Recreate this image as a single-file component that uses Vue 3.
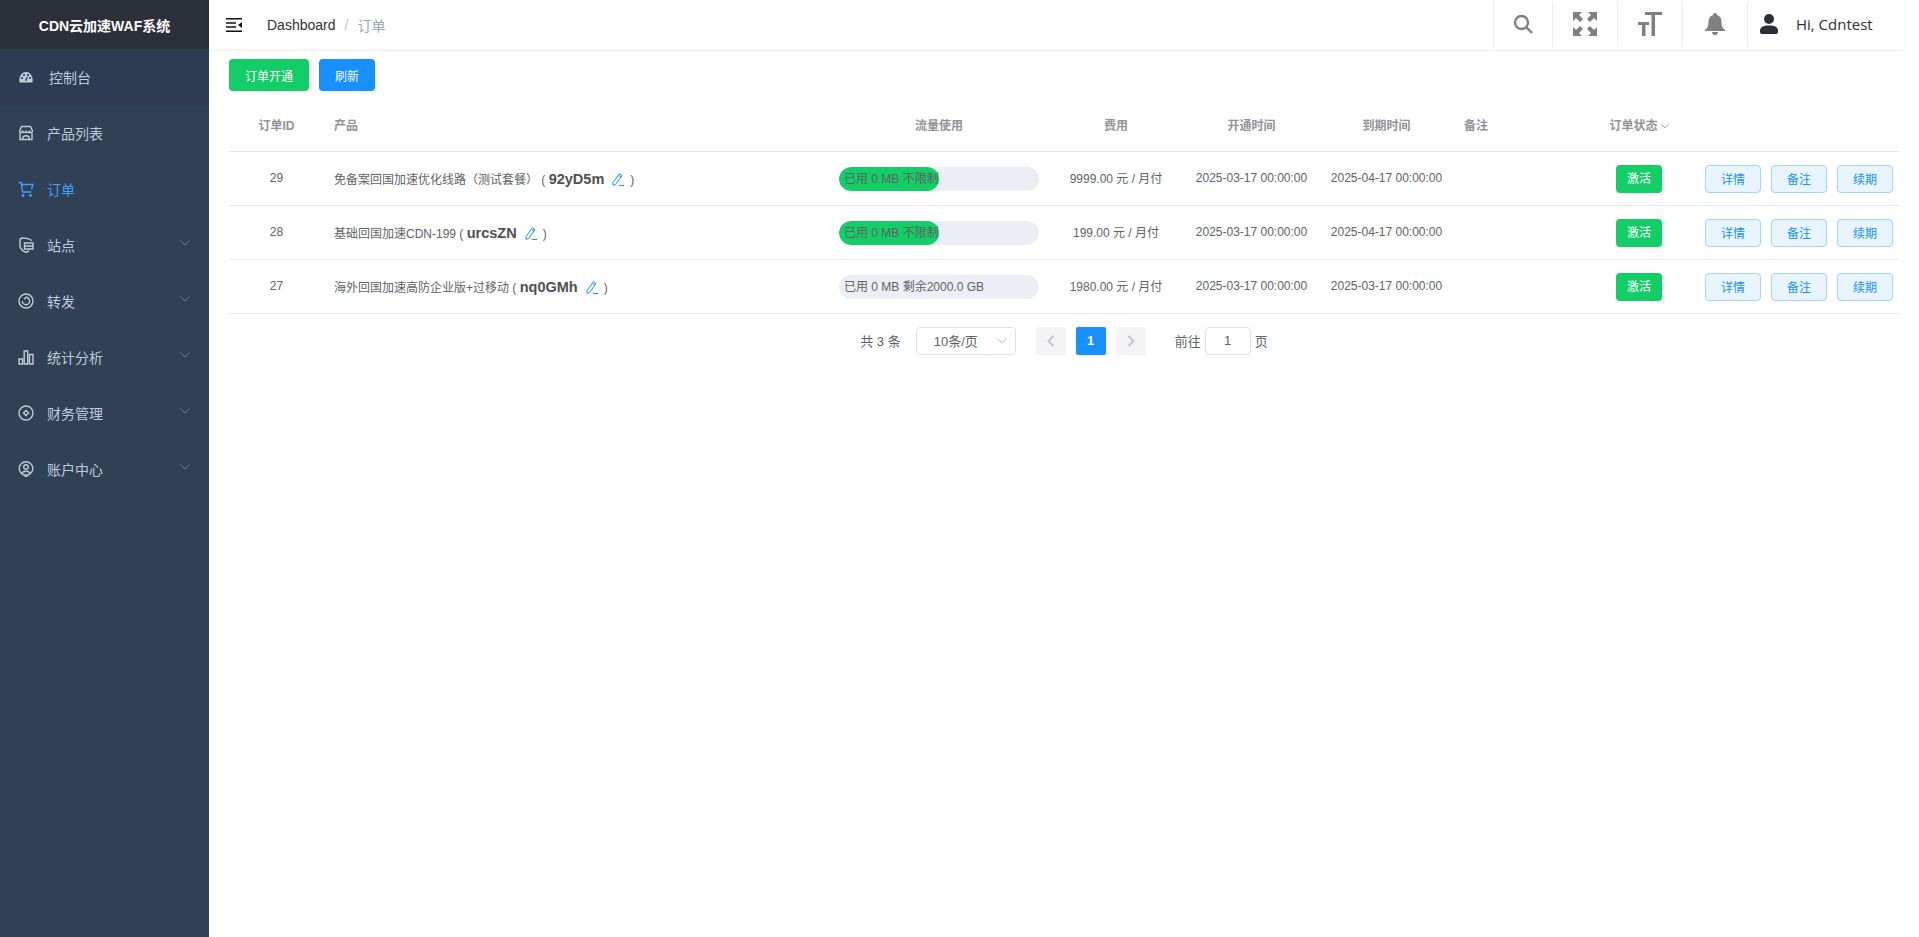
<script setup>
const menu = [
  { t: '控制台', i: 'gauge' }, { t: '产品列表', i: 'store' }, { t: '订单', i: 'cart', active: true },
  { t: '站点', i: 'site', arrow: true }, { t: '转发', i: 'ring', arrow: true }, { t: '统计分析', i: 'bars', arrow: true },
  { t: '财务管理', i: 'diamond', arrow: true }, { t: '账户中心', i: 'user', arrow: true }
]
const rows = [
  { id: 29, name: '免备案回国加速优化线路（测试套餐） (', code: '92yD5m', used: '已用 0 MB 不限制', full: true, fee: '9999.00 元 / 月付', start: '2025-03-17 00:00:00', end: '2025-04-17 00:00:00' },
  { id: 28, name: '基础回国加速CDN-199 (', code: 'urcsZN', used: '已用 0 MB 不限制', full: true, fee: '199.00 元 / 月付', start: '2025-03-17 00:00:00', end: '2025-04-17 00:00:00' },
  { id: 27, name: '海外回国加速高防企业版+过移动 (', code: 'nq0GMh', used: '已用 0 MB 剩余2000.0 GB', full: false, fee: '1980.00 元 / 月付', start: '2025-03-17 00:00:00', end: '2025-03-17 00:00:00' }
]
</script>
<template>
  <div class="page">
    <aside class="side">
      <div class="logo">CDN云加速WAF系统</div>
      <div v-for="(m, n) in menu" :key="m.t" class="item" :class="{ active: m.active, first: n === 0 }">
        <span class="mi">
          <svg viewBox="0 0 16 16" width="16" height="16" fill="none" stroke="currentColor" stroke-width="1.4">
            <template v-if="m.i === 'gauge'">
              <path d="M1.500 13.500C.5 8 3.500 3 8 3s7.500 5 6.500 10.500z" fill="currentColor" stroke="none"/>
              <g fill="#2d3c52" stroke="none"><circle cx="4" cy="9" r="1.100"/><circle cx="6" cy="6" r="1.100"/><circle cx="10" cy="6" r="1.100"/><circle cx="12" cy="9" r="1.100"/><path d="M7 11.500l2-4 .8.400-1.300 4.100z"/></g>
            </template>
            <template v-else-if="m.i === 'store'"><path d="M3.500 1.500h9l2 4.500c0 2-2.500 2-3.200.4-.8 1.600-2.500 1.600-3.300 0-.8 1.600-2.500 1.600-3.300 0C4 8 1.500 8 1.500 6zM2 8v6.500h12V8M4.500 14.500c0-5 7-5 7 0"/></template>
            <template v-else-if="m.i === 'cart'"><path d="M.5 1.500h2.700l1.300 9.500h9"/><path d="M3.500 3.500h11.500l-1.500 5"/><circle cx="5" cy="14.500" r=".7"/><circle cx="12.500" cy="14.500" r=".7"/></template>
            <template v-else-if="m.i === 'site'"><path d="M14 3.500C11 1.500 8 1 5 1 3.500 1 2 2 2 3.500V9c0 3 3 5 6 6.500l3-1.500"/><path d="M6.500 6h8.500v6H6.500zM6.500 9h8.500"/></template>
            <template v-else-if="m.i === 'ring'"><circle cx="8" cy="8" r="7"/><path d="M8 4.300A3.700 3.700 0 1 1 4.300 8M8 4.300L6 6.200"/></template>
            <template v-else-if="m.i === 'bars'"><path d="M1 10h3.500v5H1zM6.200 2h3.500v13H6.200zM11.500 5.500H15V15h-3.500z"/></template>
            <template v-else-if="m.i === 'diamond'"><circle cx="8" cy="8" r="7"/><path d="M8 5.500L10.500 8 8 10.500 5.500 8z"/></template>
            <template v-else><circle cx="8" cy="7.500" r="6.800"/><circle cx="8" cy="6" r="2.300"/><path d="M3.800 12.500C5 9.500 11 9.500 12.200 12.500M6.500 14.500L8 16l1.500-1.500"/></template>
          </svg>
        </span>
        <span>{{ m.t }}</span>
        <svg v-if="m.arrow" class="arr" viewBox="0 0 10 6" width="10" height="6" fill="none" stroke="currentColor"><path d="M.5.5L5 5 9.500.5"/></svg>
      </div>
    </aside>
    <main class="main">
      <header class="top">
        <svg class="ham" viewBox="0 0 16 14" width="16" height="14" fill="#111"><path d="M0 0h16v1.500H0zM0 4.200h10v1.500H0zM0 8.200h10v1.500H0zM0 12.500h16V14H0zM16 4v6l-4-3z"/></svg>
        <span class="crumb">Dashboard</span><span class="sep">/</span><span class="cur">订单</span>
        <div class="tools">
          <div class="tool"><svg viewBox="0 0 20 20" width="20" height="20" fill="none" stroke="#808080" stroke-width="2.400"><circle cx="8.500" cy="8.500" r="6.500"/><path d="M13 13l6 6"/></svg></div>
          <div class="tool"><svg viewBox="0 0 24 24" width="24" height="24" fill="#808080"><path d="M0 0h9L6 3l4 4-3 3-4-4-3 3zM24 0v9l-3-3-4 4-3-3 4-4-3-3zM0 24v-9l3 3 4-4 3 3-4 4 3 3zM24 24h-9l3-3-4-4 3-3 4 4 3-3z"/></svg></div>
          <div class="tool"><svg viewBox="0 0 24 24" width="24" height="24" fill="#808080"><path d="M7 0h17v3h-7v21h-3.500V3H7zM0 10h11v3H7.500v11H4V13H0z"/></svg></div>
          <div class="tool"><svg viewBox="0 0 20 22" width="20" height="22" fill="#808080"><path d="M10 0c1.200 0 2 .8 2 2 3 1 4.500 3.500 4.500 7 0 4 .8 6 3.500 8v1H0v-1c2.700-2 3.500-4 3.500-8 0-3.500 1.500-6 4.500-7 0-1.200.8-2 2-2zM7 19h6c0 1.800-1.300 3-3 3s-3-1.200-3-3z"/></svg></div>
          <div class="user"><svg viewBox="0 0 18 20" width="18" height="20" fill="#2b2f3a"><circle cx="9" cy="5" r="5"/><path d="M0 17c0-4 3-5.500 9-5.500s9 1.500 9 5.500v1c0 1.200-.8 2-2 2H2c-1.200 0-2-.8-2-2z"/></svg><span>Hi, Cdntest</span></div>
        </div>
      </header>
      <section class="body">
        <div class="acts"><button class="btn green">订单开通</button><button class="btn blue">刷新</button></div>
        <table class="tbl">
          <colgroup><col class="c1"/><col class="c2"/><col class="c3"/><col class="c4"/><col class="c5"/><col class="c5"/><col class="c7"/><col class="c8"/><col/></colgroup>
          <thead><tr>
            <th>订单ID</th><th class="l">产品</th><th>流量使用</th><th>费用</th><th>开通时间</th><th>到期时间</th><th class="l">备注</th><th>订单状态<svg class="sort" viewBox="0 0 8 5" width="8" height="5" fill="none" stroke="#a8abb2"><path d="M.5.5L4 4 7.500.5"/></svg></th><th></th>
          </tr></thead>
          <tbody>
            <tr v-for="r in rows" :key="r.id">
              <td>{{ r.id }}</td>
              <td class="l">{{ r.name }} <b class="code">{{ r.code }}</b><svg class="pen" viewBox="0 0 12 13" width="12" height="13" fill="none" stroke="#1890ff"><path d="M1 9.500L7.500.8l2.500 1.800L3.500 11.500l-2.500.8zM6.500 2.200L9 4M7 12.500h5"/></svg>)</td>
              <td class="box"><div class="bar"><div class="fill" v-if="r.full"></div><span>{{ r.used }}</span></div></td>
              <td>{{ r.fee }}</td><td>{{ r.start }}</td><td>{{ r.end }}</td><td></td>
              <td class="box"><span class="tag">激活</span></td>
              <td class="box"><div class="ops"><button class="op">详情</button><button class="op">备注</button><button class="op">续期</button></div></td>
            </tr>
          </tbody>
        </table>
        <div class="pager">
          <span>共 3 条</span>
          <div class="size">10条/页<svg viewBox="0 0 10 6" width="10" height="6" fill="none" stroke="#c0c4cc"><path d="M.5.5L5 5 9.500.5"/></svg></div>
          <div class="pbtns">
            <span class="pb"><svg viewBox="0 0 8 12" width="8" height="12" fill="none" stroke="#c0c4cc" stroke-width="1.800"><path d="M6.500 1L1.500 6l5 5"/></svg></span>
            <span class="pb on">1</span>
            <span class="pb"><svg viewBox="0 0 8 12" width="8" height="12" fill="none" stroke="#c0c4cc" stroke-width="1.800"><path d="M1.500 1l5 5-5 5"/></svg></span>
          </div>
          <span>前往</span><span class="jump">1</span><span>页</span>
        </div>
      </section>
    </main>
  </div>
</template>
<style>
html,body{margin:0;background:#fff}
</style>
<style scoped>
.page{display:flex;height:937px;font-family:"Liberation Sans","Noto Sans CJK SC",sans-serif;overflow:hidden}
.side{width:209px;flex:none;background:#304156;color:#bfcbd9}
.logo{height:49px;background:#2b2f3a;color:#fff;font-weight:700;font-size:14px;display:flex;align-items:center;justify-content:center}
.item{height:56px;display:flex;align-items:center;padding:0 19px 0 18px;font-size:14px;box-sizing:border-box}
.item.first{background:#2d3c52}
.item.active{color:#409eff}
.mi{display:flex;margin-right:13px}
.item.first .mi{margin-right:15px}
.arr{margin-left:auto;margin-bottom:4px;color:#6f7c8c}
.main{flex:1;min-width:0}
.top{height:49px;margin-right:15px;display:flex;align-items:center;padding-left:17px;box-sizing:border-box;box-shadow:0 1px 4px rgba(0,21,41,.08);font-size:14px}
.ham{margin-right:25px}
.crumb{color:#303133}
.sep{color:#c0c4cc;margin:0 9px}
.cur{color:#97a8be}
.tools{margin-left:auto;display:flex;height:100%;border-left:1px solid #f0f0f0}
.tool{width:64px;height:43px;margin-top:2px;display:flex;align-items:center;justify-content:center;border-right:1px solid #eee;padding-bottom:2px}
.tool:first-child{width:58px}
.user{width:156px;display:flex;align-items:center;gap:18px;padding-left:12px;padding-bottom:2px;box-sizing:border-box;font-family:"Open Sans",sans-serif;font-size:15px;color:#303133}
.body{padding:10px 20px 0}
.acts{display:flex;gap:10px}
.btn{height:32px;border:0;border-radius:4px;color:#fff;font-size:12px;padding:0;font-family:inherit}
.green{background:#13ce66;width:80px}.blue{background:#1890ff;width:56px}
.tbl{width:100%;border-collapse:collapse;table-layout:fixed;margin-top:8px;font-size:12px;color:#606266}
.c1{width:95px}.c2{width:506px}.c3{width:218px}.c4{width:136px}.c5{width:135px}.c7{width:129px}.c8{width:112px}
th{height:52px;box-sizing:border-box;font-weight:700;color:#909399;text-align:center;border-bottom:1px solid #e6e6e6;padding:0 0 1px}
td{height:54px;box-sizing:border-box;text-align:center;border-bottom:1px solid #e6e8f0;padding:0 0 1px}
td.box{padding:1px 0 0}
th.l,td.l{text-align:left;padding-left:10px}
td.l{padding-top:1px;padding-bottom:0}
.code{font-size:14.5px;color:#505050;line-height:16px}
.pen{margin:0 6px 0 8px;vertical-align:-2px}
.sort{margin-left:3px;vertical-align:1px}
.bar{width:200px;height:24px;margin:0 auto;border-radius:12px;background:#ebeef5;position:relative;text-align:left;line-height:24px;overflow:hidden}
.bar span{position:relative;padding-left:5px;white-space:nowrap}
.fill{position:absolute;left:0;top:0;bottom:0;width:100px;border-radius:12px;background:#13ce66}
.tag{display:block;width:46px;height:28px;line-height:28px;margin:0 auto;background:#13ce66;color:#fff;border-radius:4px}
.ops{display:flex;gap:10px;padding-left:10px}
.op{width:56px;height:28px;background:#e8f4ff;border:1px solid #a3d3ff;border-radius:4px;color:#1890ff;font-size:12px;font-family:inherit;padding:0}
.pager{display:flex;align-items:center;justify-content:center;height:28px;margin-top:13px;font-size:13px;color:#606266}
.size{width:100px;height:28px;box-sizing:border-box;border:1px solid #dcdfe6;border-radius:4px;display:flex;align-items:center;justify-content:space-between;padding:0 8px 0 17px;margin:0 20px 0 15px}
.pbtns{display:flex;gap:10px;margin-right:29px}
.pb{width:30px;height:28px;background:#f4f4f5;border-radius:2px;display:flex;align-items:center;justify-content:center}
.pb.on{background:#1890ff;color:#fff;font-weight:700;font-size:13px}
.jump{width:46px;height:28px;box-sizing:border-box;border:1px solid #dcdfe6;border-radius:4px;text-align:center;line-height:26px;margin:0 4px 0 4px}
</style>
